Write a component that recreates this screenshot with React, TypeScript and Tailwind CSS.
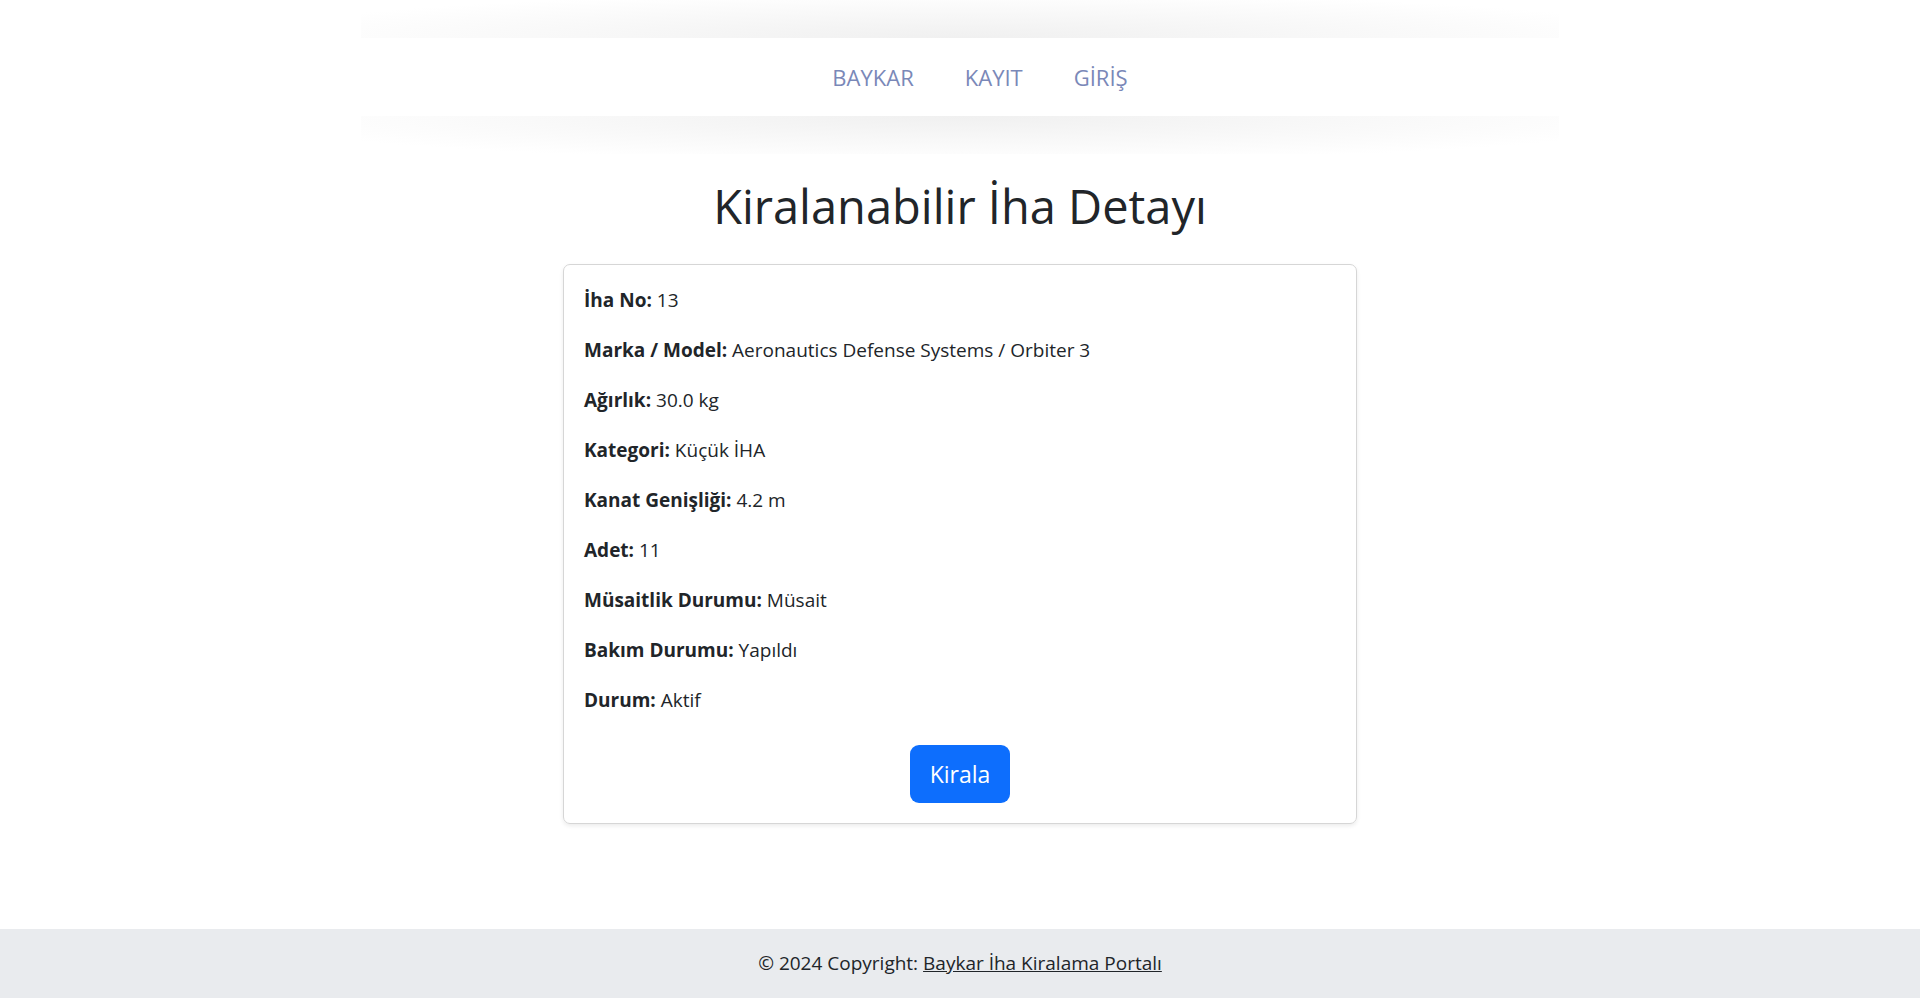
import React from "react";

const details = [
  { label: "İha No:", value: "13" },
  { label: "Marka / Model:", value: "Aeronautics Defense Systems / Orbiter 3" },
  { label: "Ağırlık:", value: "30.0 kg" },
  { label: "Kategori:", value: "Küçük İHA" },
  { label: "Kanat Genişliği:", value: "4.2 m" },
  { label: "Adet:", value: "11" },
  { label: "Müsaitlik Durumu:", value: "Müsait" },
  { label: "Bakım Durumu:", value: "Yapıldı" },
  { label: "Durum:", value: "Aktif" },
];

const links = ["BAYKAR", "KAYIT", "GİRİŞ"];

export default function App() {
  return (
    <div className="min-h-screen flex flex-col bg-white text-[#212529] font-['Segoe_UI','Open_Sans',sans-serif]">
      <header className="mx-auto w-[1198px]">
        <div className="h-[38px] bg-[radial-gradient(ellipse_at_bottom,#f0f0f0,#ffffff_85%)]" />
        <nav className="h-[78px] bg-white flex items-center justify-center gap-[51px] pl-10">
          {links.map((l) => (
            <a key={l} href="#" className="text-[22px] leading-none text-[#7a88b8]">
              {l}
            </a>
          ))}
        </nav>
        <div className="h-[38px] bg-[radial-gradient(ellipse_at_top,#f0f0f0,#ffffff_85%)]" />
      </header>

      <main className="flex-1 flex flex-col items-center">
        <h1 className="mt-[24px] mb-[30px] text-[47px] leading-[56px] font-normal">
          Kiralanabilir İha Detayı
        </h1>
        <div className="w-[794px] border border-[#d6d6d6] rounded-[7px] shadow-[0_2px_4px_rgba(0,0,0,0.08)] px-5 pt-5 pb-5 flex flex-col">
          <div className="flex flex-col gap-5">
            {details.map((d) => (
              <p key={d.label} className="text-[19px] leading-[30px]">
                <span className="font-bold">{d.label}</span> {d.value}
              </p>
            ))}
          </div>
          <div className="mt-[30px] flex justify-center">
            <button className="h-[58px] px-5 rounded-[9px] bg-[#0d6efd] text-white text-[23px] leading-none">
              Kirala
            </button>
          </div>
        </div>
      </main>

      <footer className="h-[69px] bg-[#e9ebee] flex items-center justify-center text-[19px]">
        <span>
          © 2024 Copyright:{" "}
          <a href="#" className="underline text-[#212529]">
            Baykar İha Kiralama Portalı
          </a>
        </span>
      </footer>
    </div>
  );
}
